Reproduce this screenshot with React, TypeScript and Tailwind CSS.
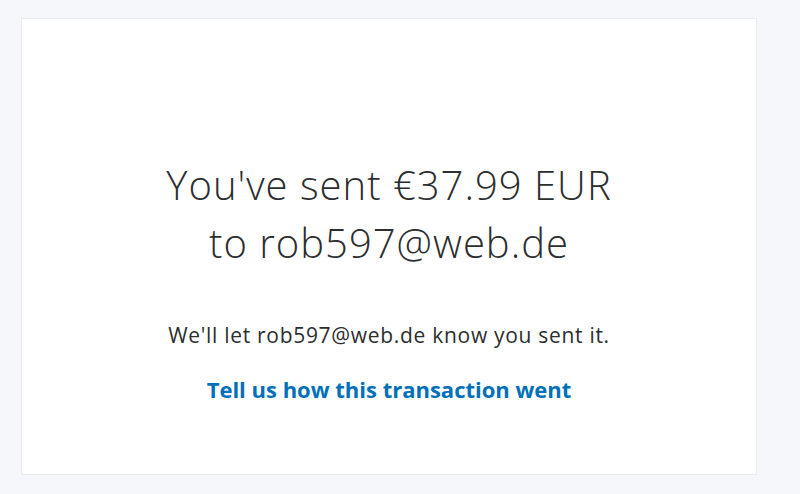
export default function App() {
  return (
    <main className="min-h-screen bg-[#f5f7fa] pt-[18px] pl-[21px] font-['Open_Sans',sans-serif]">
      <section className="w-[736px] h-[457px] bg-white border border-[#e9ebee] flex flex-col items-center text-center">
        <h1 className="mt-[137px] text-[40px] leading-[58px] tracking-[1px] font-light text-[#2c2e2f]">
          You've sent €37.99 EUR
          <br />
          to rob597@web.de
        </h1>
        <p className="mt-[48px] text-[21px] tracking-[0.7px] text-[#2c2e2f]">We'll let rob597@web.de know you sent it.</p>
        <a href="#" className="mt-[21px] text-[22px] font-bold text-[#0070ba]">
          Tell us how this transaction went
        </a>
      </section>
    </main>
  );
}
